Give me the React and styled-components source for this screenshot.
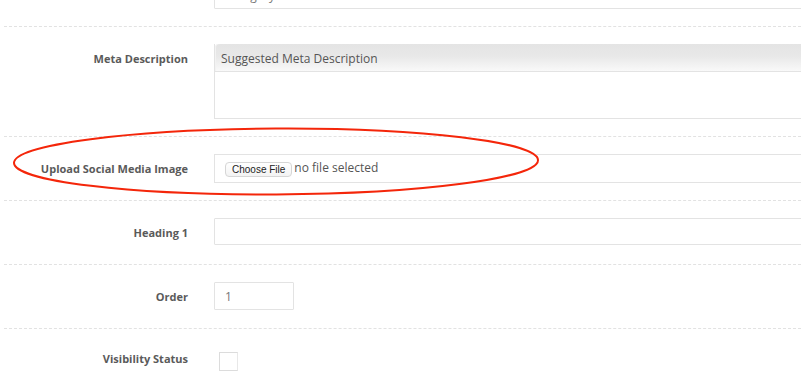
import React from "react";
import styled, { createGlobalStyle } from "styled-components";

const GlobalStyle = createGlobalStyle`
  html, body {
    margin: 0;
    padding: 0;
    background: #fff;
  }
  body {
    font-family: "Open Sans", "Liberation Sans", sans-serif;
    overflow: hidden;
  }
`;

function App() {
  return (
    <Page>
      <GlobalStyle />
      <Form>
        <Row>
          <Label />
          <Field>
            <TextInput defaultValue="Category" readOnly />
          </Field>
        </Row>
        <Row>
          <Label>Meta Description</Label>
          <Field>
            <AreaBox>
              <AreaHead>Suggested Meta Description</AreaHead>
              <AreaBody />
            </AreaBox>
          </Field>
        </Row>
        <Row>
          <Label>Upload Social Media Image</Label>
          <Field>
            <FileBox>
              <FileButton>Choose File</FileButton>
              <FileText>no file selected</FileText>
            </FileBox>
          </Field>
        </Row>
        <Row>
          <Label>Heading 1</Label>
          <Field>
            <TextInput h={27} defaultValue="" readOnly />
          </Field>
        </Row>
        <Row>
          <Label>Order</Label>
          <Field>
            <TextInput small defaultValue="1" readOnly />
          </Field>
        </Row>
        <Row last>
          <Label tight>Visibility Status</Label>
          <Field>
            <Check />
          </Field>
        </Row>
      </Form>

      {/* red annotation circle drawn over the upload row */}
      <Mark width="801" height="387" viewBox="0 0 801 387">
        <ellipse
          cx="276"
          cy="161.5"
          rx="262"
          ry="33"
          fill="none"
          stroke="#f4260a"
          strokeWidth="2"
          transform="rotate(-0.3 276 161.5)"
        />
      </Mark>
    </Page>
  );
}

export default App;

const Page = styled.div`
  position: relative;
  width: 801px;
  height: 387px;
  overflow: hidden;
`;

const Form = styled.div`
  margin-top: -36px;
  display: flex;
  flex-direction: column;
`;

const Row = styled.div`
  display: flex;
  align-items: flex-start;
  padding: 17px 0 17px;
  margin-left: 4px;
  border-bottom: ${(p) => (p.last ? "none" : "1px dashed #e2e2e2")};
`;

const Label = styled.div`
  width: 184px;
  flex-shrink: 0;
  text-align: right;
  font-size: 11px;
  font-weight: 700;
  color: #5a5a5a;
  line-height: ${(p) => (p.tight ? "25px" : "29px")};
  padding-right: 26px;
`;

const Field = styled.div`
  flex: 1;
  min-width: 0;
  overflow: visible;
`;

const TextInput = styled.input`
  display: block;
  box-sizing: border-box;
  width: ${(p) => (p.small ? "80px" : "640px")};
  height: ${(p) => p.h || 28}px;
  border: 1px solid #e3e3e3;
  border-radius: 1px;
  padding: 0 10px;
  font-family: "Open Sans", "Liberation Sans", sans-serif;
  font-size: 12px;
  color: #777;
  outline: none;
  background: #fff;
`;

const AreaBox = styled.div`
  box-sizing: border-box;
  width: 640px;
  height: 75px;
  border: 1px solid #e3e3e3;
  border-top: none;
  display: flex;
  flex-direction: column;
`;

const AreaHead = styled.div`
  height: 28px;
  flex-shrink: 0;
  box-sizing: border-box;
  padding: 0 6px;
  font-size: 12px;
  line-height: 29px;
  color: #555;
  border-radius: 4px 0 0 0;
  border-bottom: 1px solid #e3e3e3;
  background: linear-gradient(to bottom, #e4e4e4 0%, #e8e8e8 45%, #f9f9f9 100%);
  box-shadow: inset 1px 0 0 #f2f2f2;
`;

const AreaBody = styled.div`
  flex: 1;
  background: #fff;
`;

const FileBox = styled.div`
  box-sizing: border-box;
  width: 640px;
  height: 29px;
  border: 1px solid #e3e3e3;
  display: flex;
  align-items: center;
  padding-left: 10px;
  gap: 2px;
`;

const FileButton = styled.button`
  font-family: "Liberation Sans", Arial, sans-serif;
  font-size: 10px;
  color: #222;
  height: 15px;
  padding: 0 6px;
  margin-top: 1px;
  border: 1px solid #d6d6d6;
  border-radius: 4px;
  background: linear-gradient(to bottom, #ffffff, #f3f3f3);
  line-height: 13px;
`;

const FileText = styled.span`
  font-size: 12px;
  color: #555;
  margin-bottom: 3px;
`;

const Check = styled.div`
  width: 17px;
  height: 17px;
  margin: 6px 0 0 5px;
  border: 1px solid #dcdcdc;
  border-right-color: #e8e8e8;
  background: #fff;
`;

const Mark = styled.svg`
  position: absolute;
  left: 0;
  top: 0;
  pointer-events: none;
`;
